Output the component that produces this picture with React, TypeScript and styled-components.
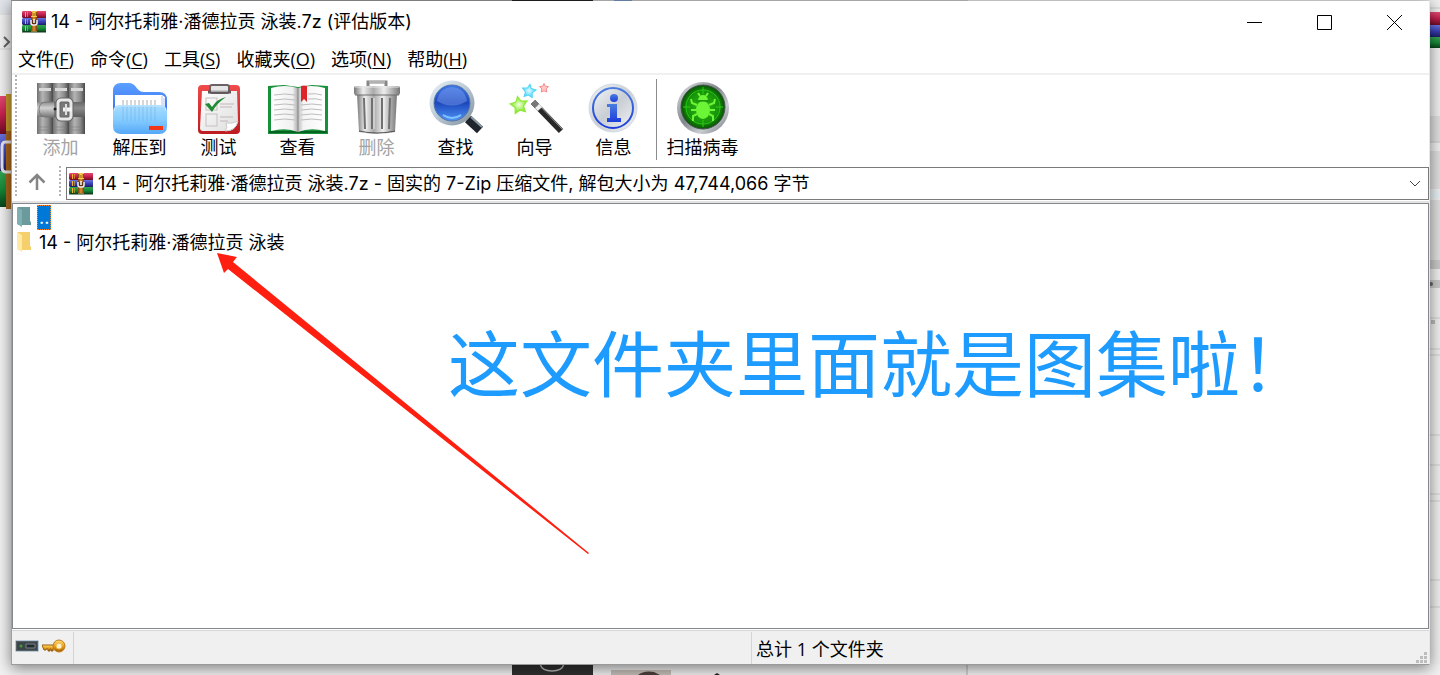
import React from "react";
import styled, { createGlobalStyle } from "styled-components";

const GlobalStyle = createGlobalStyle`
  * { box-sizing: border-box; }
  html, body { margin: 0; padding: 0; }
  body {
    background: #e9e9e9;
    color: #000;
    font-family: "Open Sans", "Noto Sans CJK SC", sans-serif;
    font-size: 18px;
    line-height: 24px;
    overflow: hidden;
  }
  button, select { font: inherit; color: inherit; border: 0; background: none; padding: 0; margin: 0; }
`;

const pathFont = `"Inter", "Noto Sans CJK SC", sans-serif`;

const Desktop = styled.div`
  position: relative;
  min-height: 100vh;
  display: flex;
  flex-direction: column;
  padding: 1px 10px 10px 11px;
  overflow: hidden;
`;

const Backdrop = styled.svg<{ $side: "left" | "right" | "top" | "bottom" }>`
  position: absolute;
  display: block;
  ${(p) => (p.$side === "right" ? "right: 0;" : "left: 0;")}
  ${(p) => (p.$side === "bottom" ? "bottom: 0;" : "top: 0;")}
`;

const Window = styled.main`
  position: relative;
  flex: 1;
  display: flex;
  flex-direction: column;
  background: #fff;
  border-left: 1px solid #a0a0a0;
  border-bottom: 1px solid #9a9a9a;
  border-right: 1px solid #e8e8e8;
  box-shadow: 0 3px 14px rgba(0, 0, 0, 0.5);
`;

const TitleBar = styled.header`
  display: flex;
  align-items: center;
  height: 42px;
  padding-left: 10px;
`;

const Title = styled.h1`
  flex: 1;
  margin: 0 0 0 5px;
  font-family: ${pathFont};
  font-size: 18px;
  font-weight: 400;
`;

const WindowButton = styled.button`
  width: 70px;
  height: 42px;
  display: grid;
  place-items: center;
`;

const MenuBar = styled.nav`
  display: flex;
  gap: 16px;
  height: 32px;
  padding: 4px 6px;
  border-bottom: 2px solid #f0f0f0;
`;

const MenuItem = styled.button`
  white-space: nowrap;
  u { text-underline-offset: 2px; text-decoration-thickness: 1px; }
`;

const Grip = styled.div`
  width: 2px;
  align-self: stretch;
  background: repeating-linear-gradient(#b4b4b4 0 2px, #fff 2px 4px);
`;

const ToolBar = styled.div`
  display: flex;
  height: 91px;
  padding-left: 3px;
`;

const Tools = styled.div`
  display: flex;
  align-items: flex-start;
  padding-top: 5px;
`;

const Tool = styled.button`
  width: 79px;
  display: flex;
  flex-direction: column;
  align-items: center;
  line-height: 22px;
  white-space: nowrap;
  &:disabled { color: #a3a3a3; }
  svg { display: block; }
`;

const MainTools = styled(Tools)`
  padding-left: 4px;
`;

const Separator = styled.div`
  width: 1px;
  height: 81px;
  margin: 4px 6px 0 3px;
  background: #8c8c8c;
`;

const AddressBar = styled.div`
  display: flex;
  height: 37px;
  padding: 0 0 3px 3px;
  border-bottom: 2px solid #e3e3e3;
`;

const UpButton = styled.button`
  width: 42px;
  padding-right: 2px;
  display: grid;
  place-items: center;
`;

const Address = styled.div`
  position: relative;
  flex: 1;
  margin: 1px 0 0 5px;
  height: 33px;
  border: 1px solid #7a7a7a;
  display: flex;
  align-items: center;
  padding-left: 2px;
`;

const AddressSelect = styled.select`
  appearance: none;
  flex: 1;
  height: 31px;
  padding: 0 36px 0 5px;
  font-family: ${pathFont};
  outline: none;
`;

const Chevron = styled.svg`
  position: absolute;
  right: 7px;
  top: 12px;
  pointer-events: none;
`;

const FileList = styled.section`
  position: relative;
  flex: 1;
  border: 1px solid #828790;
  padding: 1px 0 0 4px;
`;

const FileRow = styled.div`
  display: flex;
  align-items: center;
  height: 25px;
  svg { display: block; }
`;

const FileName = styled.button<{ $selected?: boolean }>`
  margin-left: 5px;
  height: 25px;
  padding: 0 1px;
  border: 1px ${(p) => (p.$selected ? "dotted #ff8728" : "solid transparent")};
  background: ${(p) => (p.$selected ? "#0078d7" : "transparent")};
  color: ${(p) => (p.$selected ? "#fff" : "#000")};
  font-family: ${pathFont};
  line-height: 23px;
  white-space: nowrap;
`;

const Arrow = styled.svg`
  position: absolute;
  left: 203px;
  top: 48px;
  pointer-events: none;
`;

const Note = styled.p`
  position: absolute;
  left: 435px;
  top: 108px;
  margin: 0;
  color: #1e9bff;
  font-family: "Noto Sans CJK SC", sans-serif;
  font-size: 72px;
  line-height: 96px;
  white-space: nowrap;
`;

const StatusBar = styled.footer`
  display: flex;
  height: 34px;
  margin-top: 1px;
  padding-top: 1px;
  background: #f0f0f0;
  border-top: 1px solid #d7d7d7;
`;

const StatusIcons = styled.div`
  width: 62px;
  padding: 7px 0 0 3px;
  display: flex;
  align-items: flex-start;
  gap: 3px;
  border-right: 1px solid #d5d5d5;
`;

const StatusCell = styled.div`
  flex: 1;
  padding: 5px 0 0 4px;
  & + & { border-left: 1px solid #d5d5d5; }
`;

const StatusCells = styled.div`
  flex: 1;
  display: flex;
  position: relative;
`;

const SizeGrip = styled.svg`
  position: absolute;
  right: 2px;
  bottom: 1px;
`;

const Defs = styled.svg`
  position: absolute;
`;

const Gradients = () => (
  <Defs width="0" height="0" aria-hidden="true">
    <defs>
      <linearGradient id="bookGrey"><stop offset="0" stopColor="#6f6f6f" /><stop offset=".35" stopColor="#b4b4b4" /><stop offset=".7" stopColor="#8c8c8c" /><stop offset="1" stopColor="#484848" /></linearGradient>
      <linearGradient id="beltGrey" x2="0" y2="1"><stop offset="0" stopColor="#8b8b8b" /><stop offset=".4" stopColor="#d2d2d2" /><stop offset="1" stopColor="#777" /></linearGradient>
      <linearGradient id="folderBack" x2="0" y2="1"><stop offset="0" stopColor="#5ba0ff" /><stop offset="1" stopColor="#2f5cf0" /></linearGradient>
      <linearGradient id="folderFront" x2="0" y2="1"><stop offset="0" stopColor="#a9dcff" /><stop offset=".5" stopColor="#85ccff" /><stop offset="1" stopColor="#55a8f8" /></linearGradient>
      <linearGradient id="redBoard" x2="0" y2="1"><stop offset="0" stopColor="#f04a4a" /><stop offset="1" stopColor="#bd1c20" /></linearGradient>
      <linearGradient id="paper" x2="1" y2="1"><stop offset="0" stopColor="#fff" /><stop offset="1" stopColor="#dedede" /></linearGradient>
      <linearGradient id="pageLeft"><stop offset="0" stopColor="#fff" /><stop offset=".8" stopColor="#f0f0f0" /><stop offset="1" stopColor="#aaa" /></linearGradient>
      <linearGradient id="pageRight"><stop offset="0" stopColor="#bbb" /><stop offset=".2" stopColor="#f4f4f4" /><stop offset="1" stopColor="#fff" /></linearGradient>
      <linearGradient id="steel"><stop offset="0" stopColor="#777" /><stop offset=".2" stopColor="#eee" /><stop offset=".42" stopColor="#aaa" /><stop offset=".65" stopColor="#eee" /><stop offset="1" stopColor="#777" /></linearGradient>
      <linearGradient id="rim" x2="1" y2="1"><stop offset="0" stopColor="#e9f2f8" /><stop offset=".5" stopColor="#b9c9d4" /><stop offset="1" stopColor="#7d8b96" /></linearGradient>
      <linearGradient id="lens" x2="0" y2="1"><stop offset="0" stopColor="#3e78e8" /><stop offset=".5" stopColor="#1c48bd" /><stop offset="1" stopColor="#4f93f5" /></linearGradient>
      <linearGradient id="silver" x2="1" y2="1"><stop offset="0" stopColor="#f2f4f6" /><stop offset=".5" stopColor="#c9ced4" /><stop offset="1" stopColor="#f0f2f4" /></linearGradient>
      <linearGradient id="infoBlue" x2="0" y2="1"><stop offset="0" stopColor="#4a7de0" /><stop offset="1" stopColor="#1c3ddb" /></linearGradient>
      <linearGradient id="chrome" x2="1" y2="1"><stop offset="0" stopColor="#e4e6e8" /><stop offset=".45" stopColor="#80868b" /><stop offset=".7" stopColor="#c9cdd2" /><stop offset="1" stopColor="#6b7077" /></linearGradient>
      <radialGradient id="radar"><stop offset="0" stopColor="#2fb814" /><stop offset=".7" stopColor="#17940a" /><stop offset="1" stopColor="#075204" /></radialGradient>
      <radialGradient id="starGreen"><stop offset="0" stopColor="#f3ffe0" /><stop offset="1" stopColor="#7be81c" /></radialGradient>
      <radialGradient id="starBlue"><stop offset="0" stopColor="#e4fbff" /><stop offset="1" stopColor="#42d5fb" /></radialGradient>
      <linearGradient id="red" x2="0" y2="1"><stop offset="0" stopColor="#e44a73" /><stop offset=".5" stopColor="#c41f4c" /><stop offset="1" stopColor="#6d0c24" /></linearGradient>
      <linearGradient id="blue" x2="0" y2="1"><stop offset="0" stopColor="#6a74de" /><stop offset=".5" stopColor="#3a41b8" /><stop offset="1" stopColor="#1c1d66" /></linearGradient>
      <linearGradient id="green" x2="0" y2="1"><stop offset="0" stopColor="#35a552" /><stop offset=".5" stopColor="#168a38" /><stop offset="1" stopColor="#07421a" /></linearGradient>
      <linearGradient id="leather"><stop offset="0" stopColor="#7a3c0c" /><stop offset=".5" stopColor="#e0902f" /><stop offset="1" stopColor="#7a3c0c" /></linearGradient>
      <linearGradient id="gold" x2="0" y2="1"><stop offset="0" stopColor="#ffe27a" /><stop offset=".5" stopColor="#e8a11c" /><stop offset="1" stopColor="#9a5c06" /></linearGradient>
    </defs>
  </Defs>
);

const ArchiveLogo = () => (
  <svg width="24" height="22" viewBox="0 0 24 22" aria-hidden="true">
    <path d="M1 0h23v7H1a2 2 0 0 1-1-2V2a2 2 0 0 1 1-2z" fill="url(#red)" />
    <path d="M1 7h23v7H1a2 2 0 0 1-1-2V9a2 2 0 0 1 1-2z" fill="url(#blue)" />
    <path d="M1 14h23v7H1a2 2 0 0 1-1-2v-3a2 2 0 0 1 1-2z" fill="url(#green)" />
    <path d="M3.500 1v5M3.500 8v5M3.500 15v5" stroke="#f7b32b" />
    <path d="M5.500 1v5M5.500 8v5M5.500 15v5" stroke="#f1c232" strokeOpacity=".5" />
    <rect x="9" y="0" width="6" height="21" fill="url(#leather)" />
    <path d="M9 .5h6M9 5.500h6M9 20.500h6" stroke="#f6bd52" />
    <path d="M12 1v5" stroke="#ffd24a" strokeWidth="3" />
    <path d="M12 2v3" stroke="#8a4a10" />
    <path d="M9 9v3q0 2 2 2h2q2 0 2-2V9" fill="#5e300d" stroke="#f4f4f4" strokeWidth="1.500" />
    <path d="M12 8v4" stroke="#fff" strokeWidth="1.500" />
    <path d="M0 21h24" stroke="#163a1e" />
  </svg>
);

const Icon = ({ children }: { children: React.ReactNode }) => (
  <svg width="64" height="56" viewBox="0 0 64 56" fill="none" aria-hidden="true">{children}</svg>
);

const AddIcon = () => (
  <Icon>
    {[8, 24, 40].map((x) => (
      <g key={x}>
        <path d={`M${x} 3h16v51h-16z`} fill="url(#bookGrey)" />
        <path d={`M${x + 2} 8h12v3h-12z`} fill="#d9d9d9" />
        <path d={`M${x + 2} 47h12M${x + 2} 50h12`} stroke="#777" strokeOpacity=".5" />
      </g>
    ))}
    <rect x="8" y="22" width="48" height="15" fill="url(#beltGrey)" />
    <path d="M44 22h12v15H44z" fill="#444" fillOpacity=".5" />
    <path d="M34 22H16q-6 1-6 7.500t6 7.500h18z" fill="url(#beltGrey)" stroke="#777" />
    <path d="M25 22h5v15h-5z" fill="#555" fillOpacity=".5" />
    <rect x="29" y="20" width="13" height="19" rx="3" fill="#777" stroke="#666" strokeWidth="5" />
    <rect x="29" y="20" width="13" height="19" rx="3" stroke="#e8e8e8" strokeWidth="3" />
    <path d="M34 29.500h9" stroke="#f4f4f4" strokeWidth="4" />
    <path d="M37 24v11" stroke="#ddd" strokeWidth="2" />
    <circle cx="26" cy="29" r="1.500" fill="#222" />
  </Icon>
);

const ExtractIcon = () => (
  <Icon>
    <path d="M5 11q0-8 8-8h8q4 0 7 4 3 5 8 5h15q8 0 8 8v24H5z" fill="url(#folderBack)" />
    <path d="M7 15h47l3 2v20H7z" fill="#fff" />
    <path d="M54 16v18M56 18v16" stroke="#b5c5e8" />
    <path d="M15 20v10M19 20v10M23 20v10M27 20v10M31 20v10M35 20v10M39 20v10M43 20v10M47 20v10" stroke="#c9c9c9" strokeWidth="1.500" />
    <path d="M5 32q0-7 7-7h40q7 0 7 7v14q0 8-8 8H13q-8 0-8-8z" fill="url(#folderFront)" />
    <path d="M15 26v15M19 26v15M23 26v15M27 26v15M31 26v15M35 26v15M39 26v15M43 26v15M47 26v15" stroke="#67ace5" strokeOpacity=".5" />
    <path d="M6 31q1-5 6-5h40q5 0 6 5" stroke="#c8eaff" />
    <rect x="41" y="46" width="14" height="4" fill="#f23719" />
  </Icon>
);

const TestIcon = () => (
  <Icon>
    <rect x="11" y="5" width="42" height="49" rx="4" fill="url(#redBoard)" />
    <path d="M15 11h35l1 30q-2 10-12 10H16q-3 0-3-3z" fill="url(#paper)" />
    <path d="M51 41q-5 3-12 2 2 5-1 8 11 0 13-10z" fill="#fff" stroke="#c9c9c9" />
    <rect x="23" y="5" width="19" height="8" rx="2" fill="#e6e6e6" stroke="#6b6265" strokeWidth="2" />
    <path d="M21 12h23" stroke="#60595b" strokeWidth="3" />
    <path d="M24 11h17" stroke="#eee" />
    <rect x="19" y="18" width="11" height="12" stroke="#c9bfc0" />
    <rect x="19" y="34" width="11" height="12" stroke="#c9bfc0" />
    <path d="M33 24h14M33 27h12M33 37h13M33 41h8" stroke="#c4b6b6" />
    <path d="M18 24l4-1 3 4q5-8 14-10-9 6-14 15z" fill="#218a35" />
  </Icon>
);

const ViewIcon = () => (
  <Icon>
    <path d="M2 6l16-1 14 2 14-2 16 1v48H2z" fill="#16913a" />
    <path d="M3 52h58" stroke="#066322" strokeWidth="2" />
    <path d="M5 8q14-4 27 0v44q-12-5-27-1z" fill="url(#pageLeft)" />
    <path d="M32 8q13-4 27 0v43q-15-4-27 1z" fill="url(#pageRight)" />
    <path d="M8 15q11-2 21 0M8 20q11-2 21 0M8 25q11-2 21 0M8 30q11-2 21 0M8 35q11-2 21 0M8 40q11-2 21 0M35 25q11-2 21 0M35 30q11-2 21 0M35 35q11-2 21 0M35 40q11-2 21 0M42 14q8-1 14 1M42 19q8-1 14 1" stroke="#bdbdbd" />
    <path d="M32 8v44" stroke="#888" />
    <path d="M35 6q3-1 6 0v16l-3-3-3 3z" fill="#dd2428" />
  </Icon>
);

const DeleteIcon = () => (
  <Icon>
    <path d="M23 7V2h18v5" stroke="#868686" strokeWidth="3" />
    <path d="M24 2h16" stroke="#ddd" />
    <path d="M12 14h40l-2 38q-18 4-36 0z" fill="url(#steel)" />
    <path d="M19 18l1 31M27 18v31M37 18v31M45 18l-1 31" stroke="#707070" strokeWidth="2" />
    <path d="M21 18l1 31M29 18v31M39 18v31" stroke="#eee" />
    <rect x="9" y="6" width="46" height="9" rx="2" fill="url(#steel)" />
    <path d="M10 7h44" stroke="#e8e8e8" /><path d="M10 15h44" stroke="#6e6e6e" />
    <path d="M14 51q18 4 36 0" stroke="#555" />
  </Icon>
);

const FindIcon = () => (
  <Icon>
    <path d="M41 36l5 5" stroke="#a7b1b8" strokeWidth="6" />
    <path d="M44 39l12 11" stroke="#1e252c" strokeWidth="9" />
    <path d="M47 37l11 10" stroke="#8c98a3" strokeWidth="2" />
    <circle cx="28" cy="23" r="22.500" fill="url(#rim)" />
    <circle cx="28" cy="23" r="18" fill="url(#lens)" stroke="#5574a5" />
    <path d="M13 21q2-13 15-14 13 1 15 14-15 9-30 0z" fill="#9bb6f5" fillOpacity=".35" />
    <path d="M19 35q9 6 18 0" stroke="#80c5ff" strokeWidth="2" />
  </Icon>
);

const STAR = "M0-10l3 6 7 1-5 5 1 7-6-3-6 3 1-7-5-5 7-1z";

const WizardIcon = () => (
  <Icon>
    <path d={STAR} transform="translate(16 25) rotate(-10) scale(.85)" fill="url(#starGreen)" stroke="#91e83b" strokeWidth="1.500" />
    <path d={STAR} transform="translate(26 11) rotate(8) scale(.68)" fill="url(#starBlue)" stroke="#55d5f5" strokeWidth="1.500" />
    <path d={STAR} transform="translate(41 8) scale(.45)" fill="#ffc7c7" stroke="#f48282" strokeWidth="2" />
    <path d="M30 22l28 29" stroke="#292929" strokeWidth="6" />
    <path d="M32 21l28 29" stroke="#999" strokeWidth="1" />
    <path d="M30 22l4 4" stroke="#777" strokeWidth="6" />
    <path d="M34 26l3 3" stroke="#eee" strokeWidth="6" />
  </Icon>
);

const InfoIcon = () => (
  <Icon>
    <circle cx="31" cy="28" r="24" fill="url(#silver)" stroke="#d2d9e2" />
    <circle cx="31" cy="28" r="20" fill="url(#silver)" stroke="url(#infoBlue)" strokeWidth="2" />
    <circle cx="32" cy="18" r="4" fill="url(#infoBlue)" />
    <path d="M25 24h10v14h4v4H25v-4h3V27h-3z" fill="url(#infoBlue)" />
  </Icon>
);

const VirusIcon = () => (
  <Icon>
    <circle cx="32" cy="28" r="26" fill="url(#chrome)" />
    <circle cx="32" cy="27" r="22" fill="url(#radar)" stroke="#42544a" />
    <circle cx="32" cy="27" r="17" stroke="#28ca12" />
    <path d="M32 7v7M32 40v7M12 27h7M45 27h7" stroke="#2dcc16" />
    <ellipse cx="32" cy="30" rx="7" ry="9" fill="#6cf536" />
    <path d="M27 20q1-5 5-5t5 5z" fill="#6cf536" />
    <path d="M26 25l-5-2-1-4M38 25l5-2 1-4M25 30h-5M39 30h5M26 34l-4 2v5M38 34l4 2v5M29 16l-2-3M35 16l2-3" stroke="#6cf536" strokeWidth="2" />
    <path d="M25 21h14" stroke="#16860a" />
  </Icon>
);

const FolderIcon = ({ light, dark }: { light: string; dark: string }) => (
  <svg width="15" height="21" viewBox="0 0 15 21" aria-hidden="true">
    <path d="M1 0h12v14l1 1v3H1z" fill={dark} />
    <path d="M0 0l5 3v17l-5-3z" fill={light} />
  </svg>
);

const menus = [
  ["文件", "F"], ["命令", "C"], ["工具", "S"], ["收藏夹", "O"], ["选项", "N"], ["帮助", "H"],
];

const tools = [
  { label: "添加", icon: <AddIcon />, disabled: true },
  { label: "解压到", icon: <ExtractIcon /> },
  { label: "测试", icon: <TestIcon /> },
  { label: "查看", icon: <ViewIcon /> },
  { label: "删除", icon: <DeleteIcon />, disabled: true },
  { label: "查找", icon: <FindIcon /> },
  { label: "向导", icon: <WizardIcon /> },
  { label: "信息", icon: <InfoIcon /> },
];

const DesktopBehind = () => (
  <>
    <Backdrop $side="top" width="1440" height="1" aria-hidden="true">
      <path d="M0 0h512v1H0z" fill="#979797" />
      <path d="M512 0h81v1h-81z" fill="#222" />
      <path d="M593 0h375v1H593z" fill="#c8c8c8" />
      <path d="M614 0h18v1h-18z" fill="#7596c5" />
      <path d="M968 0h472v1H968z" fill="#e4e4e4" />
    </Backdrop>
    <Backdrop $side="left" width="11" height="675" aria-hidden="true">
      <path d="M0 0h11v675H0z" fill="#f2f2f2" />
      <path d="M0 0h11v13H0z" fill="#e2e5ea" />
      <path d="M0 14h11M0 49h11" stroke="#d6d6d6" />
      <path d="M4 37l5 5-5 5" fill="none" stroke="#666" strokeWidth="2" />
      <path d="M0 96h11v38H0z" fill="url(#red)" />
      <path d="M0 134h11v37H0z" fill="url(#blue)" />
      <path d="M0 171h11v36H0z" fill="url(#green)" />
      <path d="M6 94h5v115H6z" fill="#a9661c" />
      <path d="M6 94h5v37H6z" fill="#c89a2c" />
      <path d="M11 142H5q-3 0-3 5v20q0 5 4 5h5" fill="none" stroke="#e5e5ea" strokeWidth="3" />
    </Backdrop>
    <Backdrop $side="right" width="11" height="675" aria-hidden="true">
      <path d="M0 0h11v675H0z" fill="#f0f0f0" />
      <path d="M0 12h11v13H0z" fill="url(#red)" />
      <path d="M0 25h11v12H0z" fill="url(#blue)" />
      <path d="M0 37h11v11H0z" fill="url(#green)" />
      <path d="M0 118h11v25H0zM0 151h11v38H0zM0 200h11v60H0z" fill="#e0e0e0" />
      <path d="M0 8h11M0 117h11M0 142h11M0 318h11M0 349h11M0 355h11M0 435h11M0 465h11M0 494h11M0 501h11M0 580h11M0 607h11" stroke="#cfcfcf" />
      <path d="M0 191h11v7H0z" fill="#e7f1f5" />
      <path d="M0 260h11v9H0zM0 280h11v8H0z" fill="#cacaca" />
      <circle cx="2" cy="284" r="2" fill="#666" />
      <path d="M2 320h4v4H2z" fill="#bbb" />
    </Backdrop>
    <Backdrop $side="bottom" width="1440" height="11" aria-hidden="true">
      <path d="M0 0h512v11H0z" fill="#f2f2f2" />
      <path d="M512 0h81v11h-81z" fill="#303030" />
      <path d="M540 0q2 7 12 7t12-7" fill="none" stroke="#b5b5b5" strokeWidth="1.500" />
      <path d="M593 0h374v11H593z" fill="#eee" />
      <path d="M611 6h60v5h-60z" fill="#c3bdb8" />
      <path d="M638 11q6-5 16-3l6 3z" fill="#4c403b" />
      <path d="M717 9l3 2h-6z" fill="#222" />
      <path d="M966 0h2v11h-2z" fill="#d0d0d0" />
      <path d="M968 0h472v11H968z" fill="#f2f2f2" />
    </Backdrop>
  </>
);

export default function App() {
  return (
    <Desktop>
      <GlobalStyle />
      <Gradients />
      <DesktopBehind />
      <Window>
        <TitleBar>
          <ArchiveLogo />
          <Title>14 - 阿尔托莉雅·潘德拉贡 泳装.7z (评估版本)</Title>
          <WindowButton aria-label="最小化">
            <svg width="15" height="15"><path d="M0 7.500h15" stroke="#000" /></svg>
          </WindowButton>
          <WindowButton aria-label="最大化">
            <svg width="15" height="15"><path d="M.5.5h14v14H.5z" fill="none" stroke="#000" /></svg>
          </WindowButton>
          <WindowButton aria-label="关闭">
            <svg width="15" height="15"><path d="M0 0l15 15M15 0L0 15" stroke="#000" /></svg>
          </WindowButton>
        </TitleBar>
        <MenuBar>
          {menus.map(([name, key]) => (
            <MenuItem key={key}>{name}(<u>{key}</u>)</MenuItem>
          ))}
        </MenuBar>
        <ToolBar>
          <Grip />
          <MainTools>
            {tools.map((t) => (
              <Tool key={t.label} disabled={t.disabled}>{t.icon}{t.label}</Tool>
            ))}
          </MainTools>
          <Separator />
          <Tools>
            <Tool><VirusIcon />扫描病毒</Tool>
          </Tools>
        </ToolBar>
        <AddressBar>
          <Grip />
          <UpButton aria-label="上一级">
            <svg width="18" height="18" fill="none" stroke="#858585" strokeWidth="2.500"><path d="M9 17V2M1.500 9.500L9 2l7.500 7.500" /></svg>
          </UpButton>
          <Grip />
          <Address>
            <ArchiveLogo />
            <AddressSelect aria-label="地址">
              <option>14 - 阿尔托莉雅·潘德拉贡 泳装.7z - 固实的 7-Zip 压缩文件, 解包大小为 47,744,066 字节</option>
            </AddressSelect>
            <Chevron width="12" height="8" fill="none" stroke="#444"><path d="M1 1l5 5 5-5" /></Chevron>
          </Address>
        </AddressBar>
        <FileList>
          <FileRow>
            <FolderIcon light="#7eb0b3" dark="#6a9a9c" />
            <FileName $selected>..</FileName>
          </FileRow>
          <FileRow>
            <FolderIcon light="#ffe9a3" dark="#f5cf6b" />
            <FileName>14 - 阿尔托莉雅·潘德拉贡 泳装</FileName>
          </FileRow>
          <Arrow width="376" height="304" aria-hidden="true">
            <path d="M1 1l20 4-4 5L373 301l-1 1L12 17l-4 4z" fill="#ff1f10" />
          </Arrow>
          <Note>这文件夹里面就是图集啦！</Note>
        </FileList>
        <StatusBar>
          <StatusIcons>
            <svg width="24" height="14" aria-hidden="true">
              <rect x=".5" y="1.500" width="23" height="11" rx="1" fill="#596065" stroke="#b6cbd6" />
              <path d="M2 3h20v8H2z" fill="#3c4549" /><path d="M11 5h9v4h-9z" fill="#252a2d" stroke="#77858b" />
              <circle cx="6" cy="7" r="1.500" fill="#479839" />
            </svg>
            <svg width="24" height="15" aria-hidden="true">
              <path d="M0 6h13v4h-2v2H9v-2H8v2H6v-2H4v1H2z" fill="url(#gold)" stroke="#99600c" />
              <circle cx="17" cy="7" r="6" fill="url(#gold)" stroke="#c27b12" />
              <circle cx="17" cy="7" r="3" fill="#fff1c7" stroke="#f3b646" />
            </svg>
          </StatusIcons>
          <StatusCells>
            <StatusCell />
            <StatusCell>总计 1 个文件夹</StatusCell>
            <SizeGrip width="11" height="11" fill="#bdbdbd"><path d="M8 0h3v3H8zM4 4h3v3H4zM8 4h3v3H8zM0 8h3v3H0zM4 8h3v3H4zM8 8h3v3H8z" /></SizeGrip>
          </StatusCells>
        </StatusBar>
      </Window>
    </Desktop>
  );
}
